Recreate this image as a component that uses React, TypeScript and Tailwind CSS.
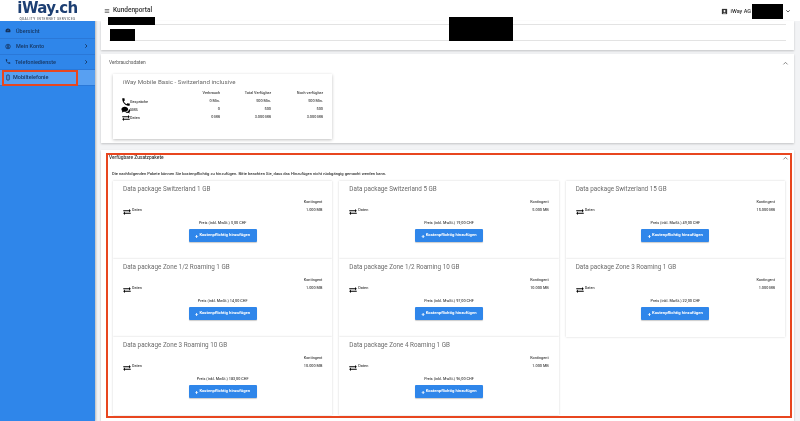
const F = "font-['Roboto',sans-serif]";

function Phone({ c = "w-[9px] h-[9px]" }: { c?: string }) {
  return (
    <svg viewBox="0 0 24 24" className={c} fill="currentColor">
      <path d="M6.6 10.8c1.4 2.8 3.8 5.1 6.6 6.6l2.2-2.2c.3-.3.7-.4 1-.2 1.1.4 2.3.6 3.6.6.6 0 1 .4 1 1V20c0 .6-.4 1-1 1C10.6 21 3 13.4 3 4c0-.6.4-1 1-1h3.5c.6 0 1 .4 1 1 0 1.3.2 2.5.6 3.6.1.3 0 .7-.2 1l-2.3 2.2z" />
    </svg>
  );
}

function Swap() {
  return (
    <svg viewBox="0 0 24 24" className="w-[10px] h-[10px] text-black" fill="currentColor">
      <path d="M6.99 11 3 15l3.99 4v-3H21v-2H6.99v-3zM21 9l-3.99-4v3H3v2h14.01v3L21 9z" />
    </svg>
  );
}

function Chat() {
  return (
    <svg viewBox="0 0 24 24" className="w-[10px] h-[10px] text-black" fill="currentColor">
      <path d="M9 4C4.6 4 1 6.7 1 10c0 1.6.8 3 2.2 4.1L2 18l4.400-2c.8.2 1.700.3 2.600.3 4.400 0 8-2.800 8-6.300S13.400 4 9 4z" />
      <path d="M19 9.500c.1.200.1.400.1.600 0 4-3.800 7.200-8.600 7.400 1.200 1 2.900 1.500 4.600 1.500.7 0 1.400-.1 2-.2l3.900 1.700-1-3.200c1.300-1 2-2.200 2-3.600 0-1.700-1.200-3.200-3-4.200z" />
    </svg>
  );
}

function Chevron() {
  return (
    <svg viewBox="0 0 24 24" className="w-[6px] h-[6px] ml-auto mr-[1px] text-[#16355f]" fill="none" stroke="currentColor" strokeWidth="3.500">
      <path d="m9 5 7 7-7 7" />
    </svg>
  );
}

function Up() {
  return (
    <svg viewBox="0 0 24 24" className="w-[7px] h-[7px] text-[#777]" fill="none" stroke="currentColor" strokeWidth="3">
      <path d="m5 15 7-7 7 7" />
    </svg>
  );
}

function NavItem({ label, icon, chevron, active, gap }: { label: string; icon: React.ReactNode; chevron?: boolean; active?: boolean; gap: string }) {
  return (
    <div className={`h-[15.500px] flex items-center ${gap} pl-[5px] pr-[5px] border-b border-[#2a78d8] text-[5.500px] font-medium text-[#16355f] ${active ? "bg-[#58a0f2]" : ""}`}>
      <span className="w-[6px] flex justify-center text-[#14305a]">{icon}</span>
      <span>{label}</span>
      {chevron && <Chevron />}
    </div>
  );
}

function Sidebar() {
  return (
    <aside className="w-[95px] shrink-0 bg-[#2f86ea] flex flex-col shadow-[1px_0_2px_rgba(0,0,0,0.25)]">
      <div className="h-[21px] bg-white flex flex-col items-center">
        <div className="text-[#1d3f72] text-[15px] leading-[17px] font-bold tracking-[-0.6px] font-['DejaVu_Sans',sans-serif]">iWay.ch</div>
        <div className="text-[#555c66] text-[3.200px] leading-[4px] tracking-[0.5px] font-medium">QUALITY INTERNET SERVICES</div>
      </div>
      <div className="flex flex-col pt-[2.500px]">
        <NavItem label="Übersicht" gap="gap-[5px]" icon={
          <svg viewBox="0 0 24 24" className="w-[7px] h-[7px]" fill="currentColor"><path d="M12 4a10 10 0 0 0-10 10c0 2 .6 3.800 1.500 5h17c.9-1.200 1.500-3 1.500-5A10 10 0 0 0 12 4zm0 11a2 2 0 0 1-1-3.700l5-3-3 5c-.3.400-.6.700-1 .7z" /></svg>
        } />
        <NavItem label="Mein Konto" gap="gap-[5px]" chevron icon={
          <svg viewBox="0 0 24 24" className="w-[7px] h-[7px]" fill="none" stroke="currentColor" strokeWidth="3"><circle cx="12" cy="12" r="9" /><circle cx="12" cy="10" r="2.500" /><path d="M7 18c1-3 9-3 10 0" /></svg>
        } />
        <NavItem label="Telefoniedienste" gap="gap-[4px]" chevron icon={<Phone c="w-[7px] h-[7px]" />} />
        <NavItem label="Mobiltelefonie" gap="gap-[2px]" active icon={
          <svg viewBox="0 0 24 24" className="w-[6px] h-[7px]" fill="none" stroke="currentColor" strokeWidth="3"><rect x="7" y="2" width="10" height="20" rx="1.500" /></svg>
        } />
      </div>
    </aside>
  );
}

function Usage() {
  const rows = [
    { icon: <span className="text-black"><Phone c="w-[10px] h-[10px]" /></span>, label: "Gespräche", a: "0 Min.", b: "500 Min.", c: "500 Min." },
    { icon: <Chat />, label: "SMS", a: "0", b: "500", c: "500" },
    { icon: <Swap />, label: "Daten", a: "0 MB", b: "3.000 MB", c: "3.000 MB" },
  ];
  return (
    <div className="w-[219px] h-[65px] bg-white shadow-[0_1px_3px_rgba(0,0,0,0.25)] pl-[9px] pr-[9px] pt-[4px]">
      <div className="text-[6.200px] leading-[9px] text-[#6a6a6a] ml-[1px]">iWay Mobile Basic - Switzerland inclusive</div>
      <div className="mt-[3px] grid grid-cols-[58px_40px_51px_1fr] text-[3.800px] text-[#444] font-medium items-center">
        <div className="h-[8px]" />
        <div className="h-[8px] text-right">Verbrauch</div>
        <div className="h-[8px] text-right">Total Verfügbar</div>
        <div className="h-[8px] text-right">Noch verfügbar</div>
        {rows.map((r) => (
          <div key={r.label} className="contents">
            <div className="h-[8px] flex items-center -ml-[1px] gap-[-1px]">{r.icon}<span className="-ml-[1px] -mt-[1px]">{r.label}</span></div>
            <div className="h-[8px] text-right">{r.a}</div>
            <div className="h-[8px] text-right">{r.b}</div>
            <div className="h-[8px] text-right">{r.c}</div>
          </div>
        ))}
      </div>
    </div>
  );
}

function Pack({ name, quota, price }: { name: string; quota: string; price: string }) {
  return (
    <div className="h-[78px] bg-white shadow-[0_0_2px_rgba(0,0,0,0.18)] px-[10px] pt-[3px] flex flex-col">
      <div className="text-[6.300px] leading-[10px] text-[#6a6a6a]">{name}</div>
      <div className="mt-[4px] flex justify-between text-[3.800px] text-[#444] font-medium">
        <div className="flex items-center -ml-[1px] mt-[7px] h-[10px]"><span className="mt-[3px]"><Swap /></span><span>Daten</span></div>
        <div className="text-right leading-[8px]"><div>Kontingent</div><div>{quota}</div></div>
      </div>
      <div className="mt-[5px] text-center text-[3.800px] leading-[6px] text-[#444] font-medium">Preis (inkl. MwSt.) {price} CHF</div>
      <div className="mt-[3px] self-center w-[68px] h-[13px] bg-[#2f86ea] rounded-[1px] text-white text-[4.200px] font-bold flex items-center justify-center shadow-[0_1px_1px_rgba(0,0,0,0.2)]">
        <span className="text-[6px] leading-none mr-[1px]">+</span>Kostenpflichtig hinzufügen
      </div>
    </div>
  );
}

const packs = [
  ["Data package Switzerland 1 GB", "1.000 MB", "5,00"],
  ["Data package Switzerland 5 GB", "5.000 MB", "19,00"],
  ["Data package Switzerland 15 GB", "15.000 MB", "49,00"],
  ["Data package Zone 1/2 Roaming 1 GB", "1.000 MB", "14,00"],
  ["Data package Zone 1/2 Roaming 10 GB", "10.000 MB", "97,00"],
  ["Data package Zone 3 Roaming 1 GB", "1.000 MB", "22,00"],
  ["Data package Zone 3 Roaming 10 GB", "10.000 MB", "183,00"],
  ["Data package Zone 4 Roaming 1 GB", "1.000 MB", "96,00"],
];

export default function App() {
  return (
    <div className={`relative w-[800px] h-[421px] overflow-hidden flex bg-[#f2f3f5] blur-[0.3px] ${F}`}>
      <Sidebar />
      <main className="flex-1 flex flex-col min-w-0">
        <header className="h-[21px] bg-white flex items-center pl-[9px] pr-[9px] pt-[1px] text-[#333]">
          <svg viewBox="0 0 24 24" className="w-[6px] h-[6px] mr-[3px]" fill="none" stroke="#444" strokeWidth="2.500"><path d="M3 6h18M3 12h18M3 18h18" /></svg>
          <span className="text-[6.500px] font-medium">Kundenportal</span>
          <div className="ml-auto flex items-center text-[5.500px] font-medium gap-[3px]">
            <svg viewBox="0 0 24 24" className="w-[7px] h-[7px]" fill="#333"><path d="M3 3h18v18H3z" /><circle cx="12" cy="10" r="3.500" fill="#fff" /><path d="M6 19c1-4 11-4 12 0z" fill="#fff" /></svg>
            <span>iWay AG</span>
            <span className="w-[28px]" />
            <svg viewBox="0 0 24 24" className="w-[6px] h-[6px]" fill="none" stroke="#333" strokeWidth="3"><path d="m5 9 7 7 7-7" /></svg>
          </div>
        </header>
        <div className="mx-[6px] h-[29px] bg-white shadow-[0_1px_2px_rgba(0,0,0,0.2)] px-[8px] flex flex-col">
          <div className="mt-[3px] h-[1px] bg-[#e3e3e3]" />
          <div className="mt-[15px] h-[1px] bg-[#e3e3e3]" />
        </div>
        <section className="mx-[6px] mt-[4px] h-[89px] bg-white shadow-[0_1px_2px_rgba(0,0,0,0.2)] pl-[8px] pr-[5px] pt-[5px]">
          <div className="flex items-center justify-between text-[4.850px] leading-[8px] text-[#555]"><span>Verbrauchsdaten</span><Up /></div>
          <div className="mt-[7px] ml-[4px]"><Usage /></div>
        </section>
        <section className="mx-[6px] mt-[7px] flex-1 bg-white shadow-[0_1px_2px_rgba(0,0,0,0.2)] pl-[8px] pr-[5px] pt-[4px]">
          <div className="flex items-center justify-between text-[4.850px] leading-[8px] text-[#333] font-medium"><span>Verfügbare Zusatzpakete</span><Up /></div>
          <div className="mt-[9px] text-[4.100px] leading-[6px] text-[#333] font-medium ml-[3px]">Die nachfolgenden Pakete können Sie kostenpflichtig zu hinzufügen. Bitte beachten Sie, dass das Hinzufügen nicht rückgängig gemacht werden kann.</div>
          <div className="mt-[4px] ml-[4px] w-[672px] grid grid-cols-3 gap-x-[7px] items-start">
            {packs.map((p) => <Pack key={p[0]} name={p[0]} quota={p[1]} price={p[2]} />)}
          </div>
        </section>
      </main>
      <div className="absolute left-[108px] top-[17px] w-[47px] h-[8px] bg-black" />
      <div className="absolute left-[110px] top-[29px] w-[25px] h-[12px] bg-black" />
      <div className="absolute left-[449px] top-[17px] w-[64px] h-[24px] bg-black" />
      <div className="absolute left-[752px] top-[4px] w-[31px] h-[15px] bg-black" />
      <div className="absolute left-[2px] top-[70px] w-[76px] h-[16px] border-2 border-[#e8461f]" />
      <div className="absolute left-[106px] top-[153px] w-[686px] h-[265px] border-2 border-[#e8461f]" />
    </div>
  );
}
